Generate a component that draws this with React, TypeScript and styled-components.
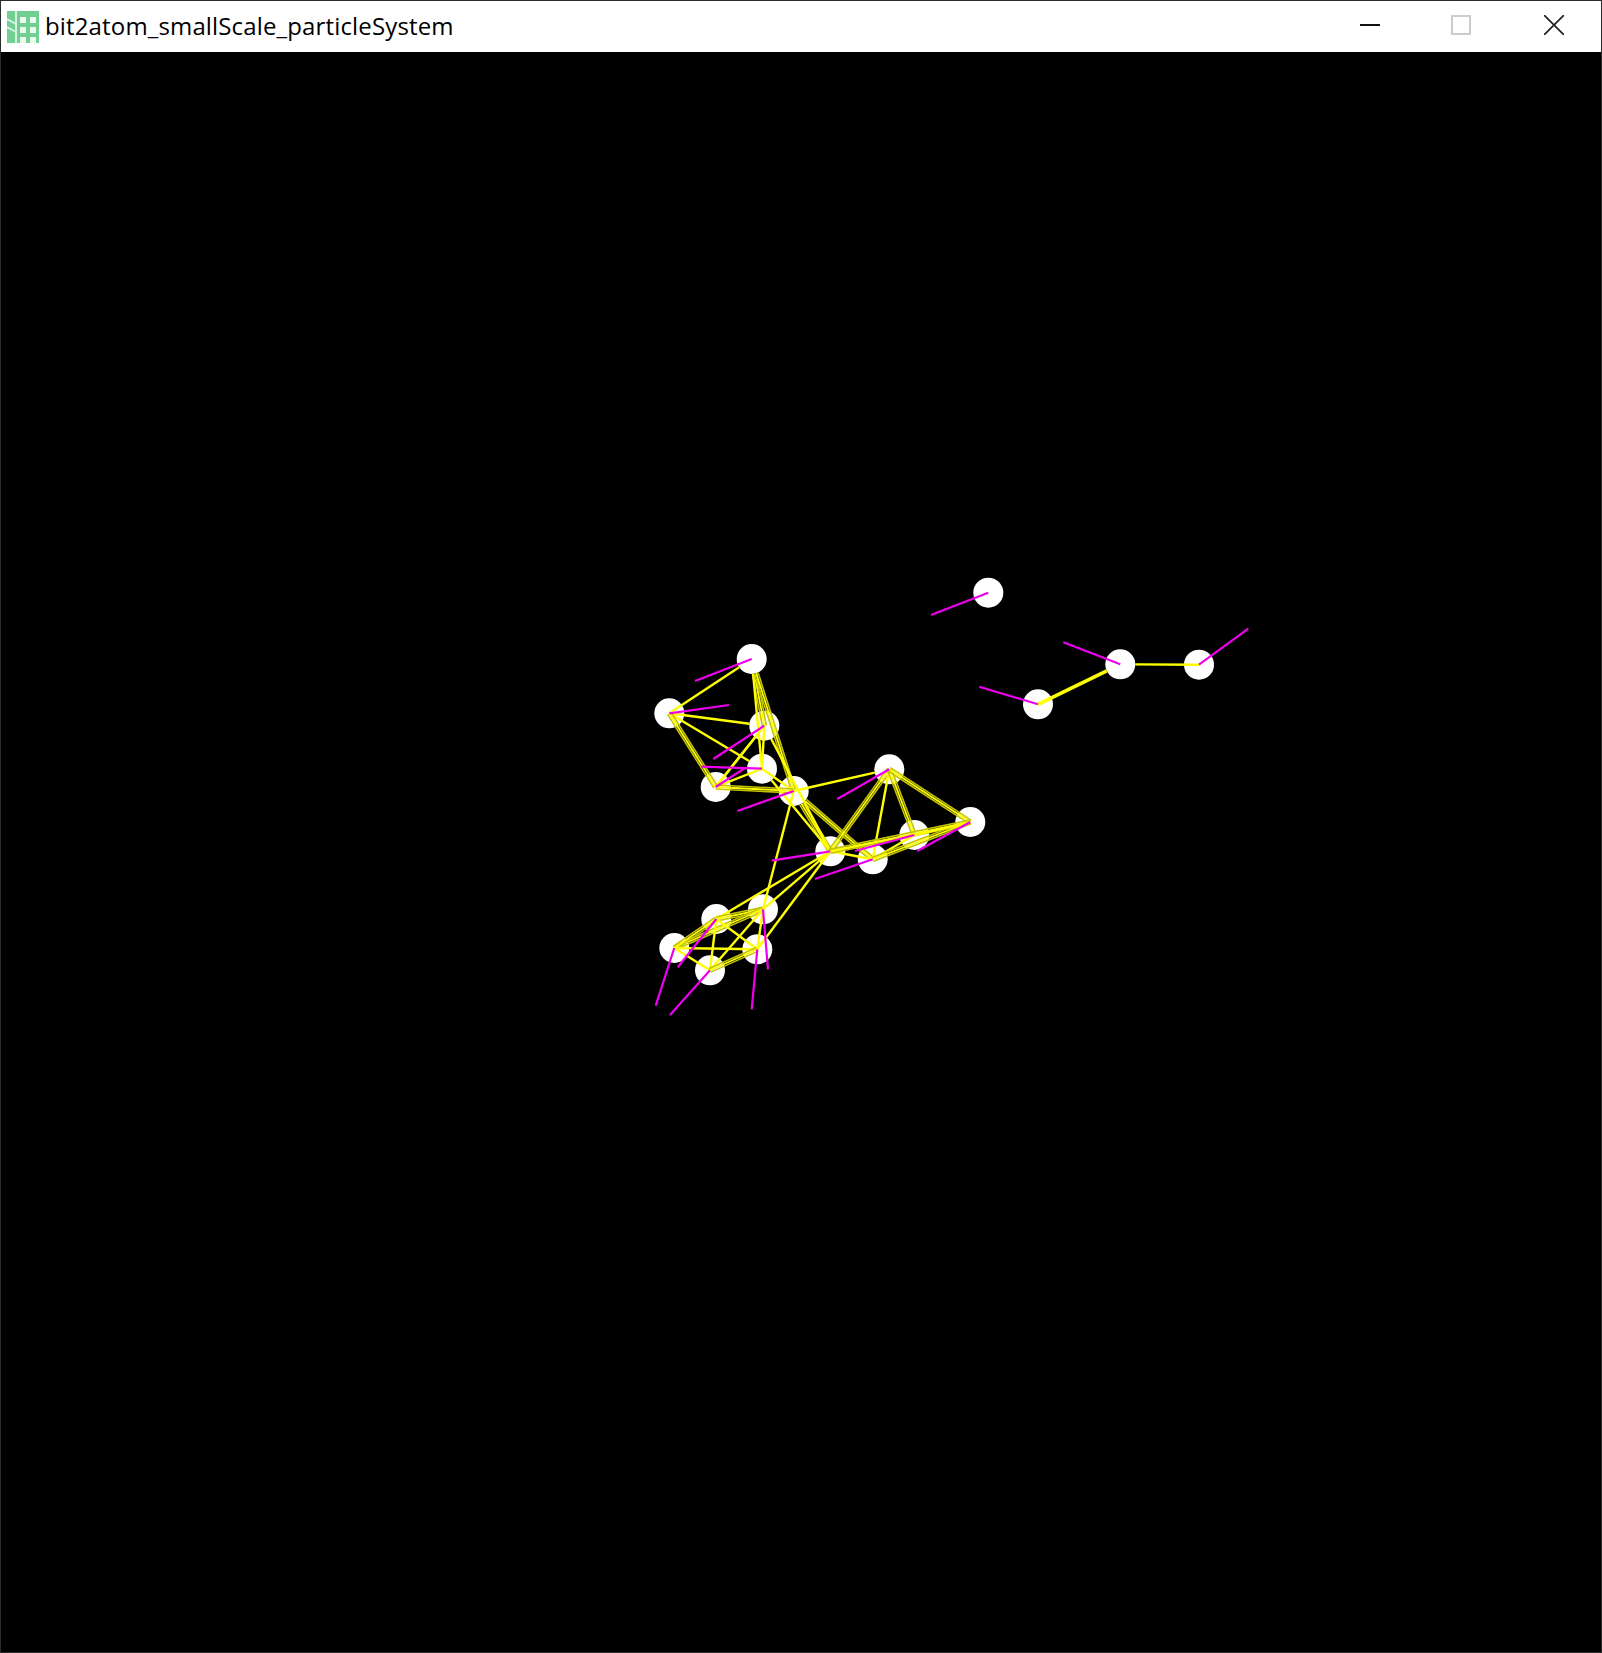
import React from 'react'
import styled, { createGlobalStyle } from 'styled-components'

type Pt = [number, number]

const RADIUS = 15

// particle centres, in page coordinates
const particles: Record<string, Pt> = {
  p1: [751.7, 659], p2: [669.3, 713.3], p3: [764.3, 725.7], p4: [762, 768.7], p5: [715.7, 787], p6: [793.7, 791],
  t: [889.3, 769.3], r: [970.3, 822], m: [914.3, 835], a: [830.3, 851.3], b: [872.7, 859.3],
  l1: [763, 909.3], l2: [716.3, 919], l3: [674.3, 948], l4: [710, 970.3], l5: [757.3, 949.3],
  s: [988.3, 592.7], c1: [1038, 704.3], c2: [1120.3, 664.3], c3: [1199, 664.7],
}

// "x-y" runs centre to centre, "x>y" stops at the rim of y
// suffix * is a bundle of near parallel lines, ! is one heavy line
const bonds: string[] = [
  'p2>p1', 'p3>p1*', 'p4>p1', 'p5>p3', 'p6>p1*', 'p2>p3', 'p2>p4', 'p2-p5*',
  'p3-p4', 'p3-p5', 'p4-p5', 'p4-p6', 'p5-p6*',
  'p6>t', 'a>p6*', 'b>p6*', 'a>p4', 'a>p3', 't-a*', 't-b', 't-m*', 't-r*',
  'a-b', 'a-m', 'a-r*', 'b-m', 'b-r*', 'm-r',
  'l1-a', 'l5-a', 'l2-a', 'l1-p6',
  'l1-l2*', 'l1-l3*', 'l1-l4', 'l1-l5', 'l2-l3*', 'l2-l4', 'l2-l5', 'l3-l4', 'l3-l5', 'l4-l5*',
  'c1>c2!', 'c3>c2',
]

// each particle's velocity tail, centre to free end
const tails: [string, Pt][] = [
  ['p1', [695, 681]], ['p2', [729, 705]], ['p3', [713.3, 759]], ['p4', [701.3, 766.7]], ['p5', [745, 768]], ['p6', [737.3, 811]],
  ['t', [837.3, 799]], ['r', [917.3, 851]], ['m', [855, 851]], ['a', [771.7, 860.7]], ['b', [815, 879]],
  ['l1', [768, 969.3]], ['l2', [677.7, 967.3]], ['l3', [655.7, 1005.7]], ['l4', [670, 1015]], ['l5', [751.7, 1009.3]],
  ['s', [931, 615]], ['c1', [979.3, 686.7]], ['c2', [1063.3, 642.3]], ['c3', [1248.3, 628.7]],
]

const rimPoint = (from: Pt, to: Pt): Pt => {
  const dx = from[0] - to[0]
  const dy = from[1] - to[1]
  const len = Math.hypot(dx, dy)
  return [to[0] + (dx / len) * RADIUS, to[1] + (dy / len) * RADIUS]
}

const Bond = ({ spec }: { spec: string }) => {
  const [x, y] = spec.replace(/[*!]/, '').split(/[->]/)
  const from = particles[x]
  const to = spec.includes('>') ? rimPoint(from, particles[y]) : particles[y]
  if (spec.endsWith('!')) {
    return <line x1={from[0]} y1={from[1]} x2={to[0]} y2={to[1]} stroke="#ffff00" strokeWidth={3.6} />
  }
  if (!spec.endsWith('*')) {
    return <line x1={from[0]} y1={from[1]} x2={to[0]} y2={to[1]} stroke="#ffff00" strokeWidth={2.4} />
  }
  const len = Math.hypot(to[0] - from[0], to[1] - from[1])
  const nx = (-(to[1] - from[1]) / len) * 2
  const ny = ((to[0] - from[0]) / len) * 2
  return (
    <>
      <line x1={from[0] + nx} y1={from[1] + ny} x2={to[0] + nx} y2={to[1] + ny} stroke="#c4c400" strokeWidth={1.6} />
      <line x1={from[0]} y1={from[1]} x2={to[0]} y2={to[1]} stroke="#ffff00" strokeWidth={1.8} />
      <line x1={from[0] - nx} y1={from[1] - ny} x2={to[0] - nx} y2={to[1] - ny} stroke="#c4c400" strokeWidth={1.6} />
    </>
  )
}

const ParticleField = () => (
  <FieldSvg viewBox="1 52 1600 1600">
    {Object.entries(particles).map(([id, [cx, cy]]) => (
      <circle key={id} cx={cx} cy={cy} r={RADIUS} fill="#fff" />
    ))}
    {bonds.map((bond) => (
      <Bond key={bond} spec={bond} />
    ))}
    {tails.map(([id, end]) => (
      <line key={id} x1={particles[id][0]} y1={particles[id][1]} x2={end[0]} y2={end[1]} stroke="#ee00ee" strokeWidth={2.2} />
    ))}
  </FieldSvg>
)

const App = () => {
  return (
    <Page>
      <GlobalStyle />
      <TitleBar>
        <AppIcon viewBox="0 0 32 32">
          <rect width="32" height="32" fill="#72cf92" />
          <path d="M0 8l9 5M0 16l9 5M9 0v32" stroke="#d5f1df" strokeWidth="2" />
          <path d="M13 6h6v6h-6zM23 6h6v6h-6zM13 16h6v6h-6zM23 16h6v6h-6zM13 26h6v6h-6zM23 26h6v6h-6z" fill="#eafaef" />
        </AppIcon>
        <Title>bit2atom_smallScale_particleSystem</Title>
        <WindowButtons>
          <WindowButton $width={92}>
            <ButtonGlyph viewBox="0 0 20 20"><path d="M0 10h20" stroke="#111" strokeWidth="2" /></ButtonGlyph>
          </WindowButton>
          <WindowButton $width={90}>
            <ButtonGlyph viewBox="0 0 20 20"><rect x="1" y="1" width="18" height="18" fill="none" stroke="#ccc" strokeWidth="2" /></ButtonGlyph>
          </WindowButton>
          <WindowButton $width={95}>
            <ButtonGlyph viewBox="0 0 20 20"><path d="M0 0l20 20M20 0L0 20" stroke="#222" strokeWidth="1.7" /></ButtonGlyph>
          </WindowButton>
        </WindowButtons>
      </TitleBar>
      <Canvas>
        <ParticleField />
      </Canvas>
    </Page>
  )
}

export default App

const GlobalStyle = createGlobalStyle`
  html, body {
    margin: 0;
    padding: 0;
    background: #000;
  }
`

const Page = styled.div`
  box-sizing: border-box;
  width: 1602px;
  height: 1653px;
  display: flex;
  flex-direction: column;
  overflow: hidden;
  border: 1px solid #2b2b2b;
`

const TitleBar = styled.div`
  height: 51px;
  flex-shrink: 0;
  display: flex;
  align-items: center;
  background-color: #fff;
  padding-left: 6px;
`

const AppIcon = styled.svg`
  width: 32px;
  height: 32px;
  flex-shrink: 0;
  filter: blur(0.7px);
`

const Title = styled.div`
  margin-left: 6px;
  margin-bottom: 2px;
  font-family: 'Open Sans', 'Liberation Sans', sans-serif;
  font-size: 24px;
  letter-spacing: 0.15px;
  color: #000;
`

const WindowButtons = styled.div`
  margin-left: auto;
  display: flex;
  align-items: flex-start;
  align-self: flex-start;
`

const WindowButton = styled.div<{ $width: number }>`
  width: ${(props) => props.$width}px;
  height: 48px;
  display: flex;
  align-items: center;
  justify-content: center;
`

const ButtonGlyph = styled.svg`
  width: 20px;
  height: 20px;
`

const Canvas = styled.div`
  flex: 1;
  background-color: #000;
`

const FieldSvg = styled.svg`
  display: block;
  width: 100%;
  height: 100%;
`
